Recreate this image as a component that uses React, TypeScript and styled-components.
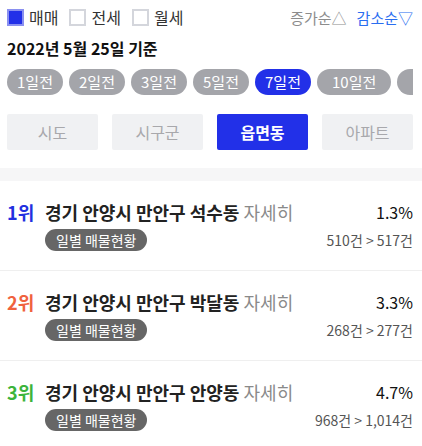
import React from "react";
import styled, { createGlobalStyle } from "styled-components";

const BLUE = "#2230e8";

const GlobalStyle = createGlobalStyle`
  html, body {
    margin: 0;
    padding: 0;
    background: #ffffff;
    font-family: "Noto Sans CJK KR", "Noto Sans", sans-serif;
    color: #222;
  }
`;

const days = ["1일전", "2일전", "3일전", "5일전", "7일전", "10일전"];
const tabs = ["시도", "시구군", "읍면동", "아파트"];
const items = [
  { rank: 1, color: "#2230e0", name: "경기 안양시 만안구 석수동", rate: "1.3%", count: "510건 > 517건" },
  { rank: 2, color: "#f0623e", name: "경기 안양시 만안구 박달동", rate: "3.3%", count: "268건 > 277건" },
  { rank: 3, color: "#3cb43c", name: "경기 안양시 만안구 안양동", rate: "4.7%", count: "968건 > 1,014건" },
];

export default function App() {
  return (
    <>
      <GlobalStyle />
      <Page>
        <Top>
          <Filter>
            <Check>
              <Box checked />
              매매
            </Check>
            <Check>
              <Box />
              전세
            </Check>
            <Check>
              <Box />
              월세
            </Check>
          </Filter>
          <Sorts>
            <Sort>증가순△</Sort>
            <Sort active>감소순▽</Sort>
          </Sorts>
        </Top>
        <DateLine>2022년 5월 25일 기준</DateLine>
        <Pills>
          {days.map((d) => (
            <Pill key={d} active={d === "7일전"} wide={d.length > 3}>{d}</Pill>
          ))}
          {/* next pill, scrolled out of view */}
          <Pill aria-hidden />
        </Pills>
        <Tabs>
          {tabs.map((t) => (
            <Tab key={t} active={t === "읍면동"}>{t}</Tab>
          ))}
        </Tabs>
      </Page>
      <Band />
      <List>
        {items.map((it) => (
          <Item key={it.rank}>
            <Rank color={it.color}>{it.rank}위</Rank>
            <Body>
              <Line>
                <Title>
                  {it.name} <More>자세히</More>
                </Title>
                <Rate>{it.rate}</Rate>
              </Line>
              <Line>
                <Badge>일별 매물현황</Badge>
                <Count>{it.count}</Count>
              </Line>
            </Body>
          </Item>
        ))}
      </List>
    </>
  );
}

const Page = styled.div`
  padding: 5px 9px 0 7px;
`;

const Top = styled.div`
  display: flex;
  justify-content: space-between;
  align-items: center;
  height: 24px;
`;

const Filter = styled.div`
  display: flex;
  align-items: center;
  gap: 11px;
`;

const Check = styled.label`
  display: flex;
  align-items: center;
  gap: 5px;
  font-size: 16px;
  color: #333;
`;

const Box = styled.span<{ checked?: boolean }>`
  width: 17px;
  height: 17px;
  box-sizing: border-box;
  border: 2px solid ${(p) => (p.checked ? "#8a90f0" : "#d4d6dc")};
  background: ${(p) => (p.checked ? BLUE : "#fff")};
`;

const Sorts = styled.div`
  display: flex;
  gap: 10px;
`;

const Sort = styled.span<{ active?: boolean }>`
  font-size: 15px;
  color: ${(p) => (p.active ? "#2a6ef0" : "#8c8c8c")};
`;

const DateLine = styled.div`
  margin-top: 8px;
  font-size: 16px;
  font-weight: 700;
  color: #111;
  height: 22px;
  line-height: 22px;
`;

const Pills = styled.div`
  display: flex;
  gap: 6px;
  margin-top: 10px;
  overflow: hidden;
  width: 406px;
`;

const Pill = styled.span<{ active?: boolean; wide?: boolean }>`
  flex: none;
  min-width: 36px;
  height: 26px;
  line-height: 26px;
  padding: 0 ${(p) => (p.wide ? 15 : 10)}px;
  border-radius: 13px;
  font-size: 15px;
  color: #fff;
  background: ${(p) => (p.active ? BLUE : "#a4a5aa")};
`;

const Tabs = styled.div`
  display: grid;
  grid-template-columns: repeat(4, 1fr);
  gap: 14px;
  margin-top: 19px;
  margin-bottom: 18px;
`;

const Tab = styled.div<{ active?: boolean }>`
  height: 36px;
  line-height: 36px;
  border-radius: 2px;
  text-align: center;
  font-size: 16px;
  font-weight: ${(p) => (p.active ? 700 : 400)};
  color: ${(p) => (p.active ? "#fff" : "#a8a8ac")};
  background: ${(p) => (p.active ? BLUE : "#f0f1f3")};
`;

const Band = styled.div`
  height: 13px;
  background: #f6f6f7;
`;

const List = styled.div``;

const Item = styled.div`
  display: flex;
  padding: 18px 9px 0 7px;
  height: 90px;
  box-sizing: border-box;
  border-bottom: 1px solid #efefef;
`;

const Rank = styled.div<{ color: string }>`
  width: 38px;
  font-size: 18px;
  font-weight: 700;
  color: ${(p) => p.color};
  line-height: 26px;
`;

const Body = styled.div`
  flex: 1;
  display: flex;
  flex-direction: column;
  gap: 4px;
`;

const Line = styled.div`
  display: flex;
  justify-content: space-between;
  align-items: center;
`;

const Title = styled.div`
  font-size: 18px;
  font-weight: 700;
  color: #222;
  line-height: 26px;
`;

const More = styled.span`
  font-weight: 400;
  color: #8a8a8a;
`;

const Rate = styled.div`
  font-size: 16px;
  color: #111;
`;

const Badge = styled.span`
  height: 22px;
  line-height: 22px;
  padding: 0 11px;
  border-radius: 11px;
  background: #666;
  color: #fff;
  font-size: 14px;
`;

const Count = styled.span`
  font-size: 14px;
  color: #555;
`;
